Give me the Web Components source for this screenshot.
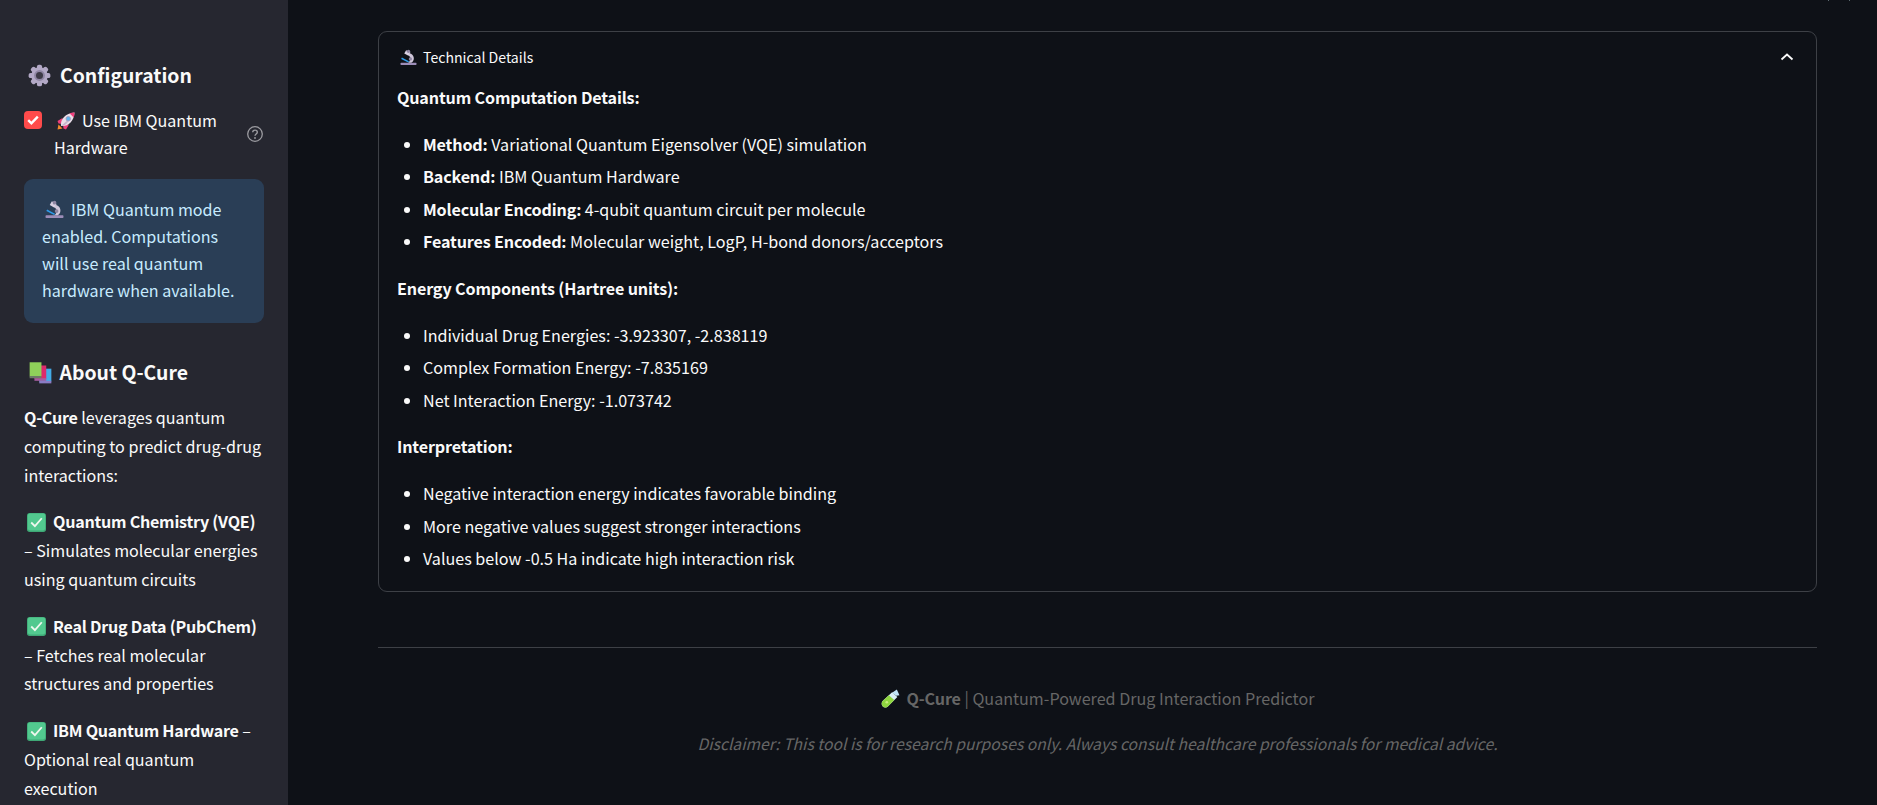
<!DOCTYPE html>
<html lang="en">
<head>
<meta charset="utf-8">
<title>Q-Cure</title>
<style>
    html, body {
        margin: 0;
        height: 100%;
        overflow: hidden;
        background: #0e1117;
        color: #fafafa;
        font-family: "Noto Sans CJK SC", "Noto Sans", sans-serif;
    }
    li b { letter-spacing: -.15px; }
    q-note b { letter-spacing: -.25px; }
</style>
</head>
<body>

<q-app>
    <q-sidebar slot="sidebar">
        <q-heading emoji="gear">Configuration</q-heading>
        <q-checkbox emoji="rocket">Use IBM Quantum Hardware</q-checkbox>
        <q-info emoji="microscope">IBM Quantum mode enabled. Computations will use real quantum hardware when available.</q-info>
        <q-heading emoji="books" class="about">About Q-Cure</q-heading>
        <q-note><b>Q-Cure</b> leverages quantum computing to predict drug-drug interactions:</q-note>
        <q-note check><b>Quantum Chemistry (VQE)</b> – Simulates molecular energies using quantum circuits</q-note>
        <q-note check><b>Real Drug Data (PubChem)</b> – Fetches real molecular structures and properties</q-note>
        <q-note check><b>IBM Quantum Hardware</b> – Optional real quantum execution</q-note>
    </q-sidebar>

    <q-expander label="Technical Details" emoji="microscope">
        <q-detail-group title="Quantum Computation Details:">
            <li><b>Method:</b> Variational Quantum Eigensolver (VQE) simulation</li>
            <li><b>Backend:</b> IBM Quantum Hardware</li>
            <li><b>Molecular Encoding:</b> 4-qubit quantum circuit per molecule</li>
            <li><b>Features Encoded:</b> Molecular weight, LogP, H-bond donors/acceptors</li>
        </q-detail-group>
        <q-detail-group title="Energy Components (Hartree units):">
            <li>Individual Drug Energies: -3.923307, -2.838119</li>
            <li>Complex Formation Energy: -7.835169</li>
            <li>Net Interaction Energy: -1.073742</li>
        </q-detail-group>
        <q-detail-group title="Interpretation:" class="last">
            <li>Negative interaction energy indicates favorable binding</li>
            <li>More negative values suggest stronger interactions</li>
            <li>Values below -0.5 Ha indicate high interaction risk</li>
        </q-detail-group>
    </q-expander>

    <q-footer></q-footer>
</q-app>

<script>
'use strict'

// Emoji drawn by hand, there is no colour emoji font on the machine.
const EMOJI = {
    gear: `<svg viewBox="0 0 36 36">
        <g fill="#b3a9c6">
            <circle cx="18" cy="18" r="13"/>
            <rect x="14" y="1" width="8" height="34" rx="3"/>
            <rect x="14" y="1" width="8" height="34" rx="3" transform="rotate(45 18 18)"/>
            <rect x="14" y="1" width="8" height="34" rx="3" transform="rotate(90 18 18)"/>
            <rect x="14" y="1" width="8" height="34" rx="3" transform="rotate(135 18 18)"/>
        </g>
        <circle cx="18" cy="18" r="8.5" fill="#8f86a3"/>
        <circle cx="18" cy="18" r="5.5" fill="#3d3a46"/>
    </svg>`,
    rocket: `<svg viewBox="0 0 36 36">
        <path d="M1 35l2-10 8 8z" fill="#f58a2c"/>
        <path d="M11 12L1 18l2 5 8 1zM24 25l-6 10-5-2-1-8z" fill="#ef3f7c"/>
        <path d="M8 28C6 15 17 2 35 1c-1 18-14 29-27 27z" fill="#eadfe9"/>
        <path d="M25 2.500c3-.9 6.500-1.400 10-1.500-.1 3.500-.6 7-1.500 10z" fill="#ef3f7c"/>
        <path d="M8 28l18-16c-3 9-10 16-18 16z" fill="#c9b4cc"/>
        <circle cx="22.500" cy="13.500" r="4.500" fill="#5fb4ec" stroke="#a79bbb" stroke-width="1.800"/>
    </svg>`,
    microscope: `<svg viewBox="0 0 36 36">
        <rect x="1" y="29" width="34" height="5" rx="1.500" fill="#9c8db8"/>
        <path d="M20 9c10 2 13 15 4 20h-7c6-3 7-12 1-15z" fill="#cfc6da"/>
        <path d="M13 2.500l9 5-4 7-9-5z" fill="#d9d0e2"/>
        <circle cx="18" cy="5" r="3.500" fill="#8f86a3"/>
        <circle cx="22" cy="21" r="3.500" fill="#8f86a3"/>
        <path d="M4 18l15 8-1.500 2.500L2.500 21z" fill="#2f9bea"/>
    </svg>`,
    books: `<svg viewBox="0 0 36 36">
        <path d="M16 12h19v20H16z" fill="#43ace8"/>
        <path d="M16 31h19v4H16z" fill="#8a7cc4"/>
        <path d="M8.500 7h18.500v21H8.500z" fill="#dd2a6c"/>
        <path d="M8.500 27h18.500v4H8.500z" fill="#a65ca0"/>
        <path d="M1 2h18.500v22H1z" fill="#8fd15a"/>
        <path d="M1 23.500h18.500v3.500H1z" fill="#6d7a68"/>
    </svg>`,
    check: `<svg viewBox="0 0 36 36">
        <rect x="0" y="0" width="36" height="36" rx="5" fill="#3fa876"/>
        <rect x="1.500" y="1" width="33" height="32" rx="4" fill="#52c98f"/>
        <path d="M8 18l7 7L28 10" fill="none" stroke="#eef8ee" stroke-width="3.400"/>
    </svg>`,
    tube: `<svg viewBox="0 0 36 36">
        <path d="M21 7l9-6 5 11-6 1z" fill="#bfe3f7"/>
        <path d="M21 6l10 9-17 17c-4 4-8 3.500-10.500 1S0 26 4 22z" fill="#d8eff7"/>
        <path d="M15 12l10 9-11 11c-4 4-8 3.500-10.500 1S0 26 4 22z" fill="#8fd63f"/>
        <circle cx="11" cy="25" r="2.500" fill="#c8ee7e"/>
    </svg>`
};

// Inline emoji, sized by the parent through custom properties.
class QEmoji extends HTMLElement {
    connectedCallback() {
        const root = this.shadowRoot || this.attachShadow({ mode: 'open' });
        root.innerHTML = `
        <style>
            :host {
                display: inline-block;
                width: var(--emoji-size, 18px);
                height: var(--emoji-size, 18px);
                margin: var(--emoji-margin, 0 7px 0 3px);
            }
            svg { display: block; width: 100%; height: 100%; }
        </style>
        ${EMOJI[this.getAttribute('name')] || ''}`;
    }
}
customElements.define('q-emoji', QEmoji);

// Two column page: sidebar on the left, content in the slot on the right.
class QApp extends HTMLElement {
    constructor() {
        super();
        this.attachShadow({ mode: 'open' });
        this.shadowRoot.innerHTML = `
        <style>
            :host {
                display: grid;
                grid-template-columns: 288px 1fr;
                height: 805px;
                overflow: hidden;
            }
            main {
                padding: 0 60px 0 90px;
                min-width: 0;
            }
            .clipped {
                display: flex;
                justify-content: flex-end;
                gap: 20px;
                height: 1px;
                margin: 0 -33px 30px 0;
            }
            .clipped i { width: 1px; height: 1px; background: #5c6a70; }
        </style>
        <slot name="sidebar"></slot>
        <main>
            <div class="clipped"><i></i><i></i></div>
            <slot></slot>
        </main>`;
    }
}
customElements.define('q-app', QApp);

class QSidebar extends HTMLElement {
    constructor() {
        super();
        this.attachShadow({ mode: 'open' });
        this.shadowRoot.innerHTML = `
        <style>
            :host {
                display: block;
                box-sizing: border-box;
                height: 805px;
                overflow: hidden;
                background: #262730;
                padding: 60px 24px 0;
            }
        </style>
        <slot></slot>`;
    }
}
customElements.define('q-sidebar', QSidebar);

class QHeading extends HTMLElement {
    constructor() {
        super();
        this.attachShadow({ mode: 'open' });
        this.shadowRoot.innerHTML = `
        <style>
            :host {
                display: block;
                font-size: 19.400px;
                font-weight: 600;
                line-height: 30px;
                margin: 0 0 16.5px;
                padding-left: 4px;
            }
            :host(.about) { margin: 34px 0 16.5px; padding-left: 4.500px; --heading-gap: 8px; }
            q-emoji { --emoji-size: 23px; --emoji-margin: 0 var(--heading-gap, 9px) 0 0; vertical-align: -4px; }
        </style>
        <q-emoji name="${this.getAttribute('emoji')}"></q-emoji><slot></slot>`;
    }
}
customElements.define('q-heading', QHeading);

class QCheckbox extends HTMLElement {
    constructor() {
        super();
        this.attachShadow({ mode: 'open' });
        this.shadowRoot.innerHTML = `
        <style>
            :host {
                display: flex;
                align-items: center;
                font-size: 16.100px;
                line-height: 27px;
                margin-bottom: 18.5px;
            }
            .box {
                flex: none;
                align-self: flex-start;
                width: 18px;
                height: 18px;
                margin: 4.500px 12px 0 0;
                background: #ff4b4b;
                border-radius: 4px;
            }
            .box svg { display: block; width: 18px; height: 18px; }
            .label { flex: 1; min-width: 0; }
            .help { flex: none; display: block; width: 18px; height: 18px; }
            q-emoji { --emoji-size: 18px; --emoji-margin: 0 7px 0 3px; vertical-align: -3px; }
        </style>
        <span class="box">
            <svg viewBox="0 0 18 18"><path d="M4.200 9.200l3.200 3.200 6.400-6.800" fill="none" stroke="#fff" stroke-width="2.400"/></svg>
        </span>
        <span class="label"><q-emoji name="${this.getAttribute('emoji')}"></q-emoji><slot></slot></span>
        <svg class="help" viewBox="0 0 18 18" fill="none" stroke="#9c9ca1" stroke-width="1.300">
            <circle cx="9" cy="9" r="7.300"/>
            <path d="M6.700 7.300c0-1.300 1-2.200 2.300-2.200s2.300.9 2.300 2.100c0 1.700-2.300 1.800-2.300 3.500" stroke-width="1.400"/>
            <circle cx="9" cy="13" r=".9" fill="#9c9ca1" stroke="none"/>
        </svg>`;
    }
}
customElements.define('q-checkbox', QCheckbox);

class QInfo extends HTMLElement {
    constructor() {
        super();
        this.attachShadow({ mode: 'open' });
        this.shadowRoot.innerHTML = `
        <style>
            :host {
                display: block;
                box-sizing: border-box;
                background: #2a3e56;
                color: #c7ebff;
                border-radius: 9px;
                padding: 17px 18px 18.500px;
                font-size: 16.100px;
                line-height: 27px;
            }
            q-emoji { --emoji-size: 19px; --emoji-margin: 0 7px 0 3px; vertical-align: -3px; }
        </style>
        <q-emoji name="${this.getAttribute('emoji')}"></q-emoji><slot></slot>`;
    }
}
customElements.define('q-info', QInfo);

// Paragraph of the sidebar, "check" puts the green tick in front.
class QNote extends HTMLElement {
    constructor() {
        super();
        this.attachShadow({ mode: 'open' });
        const tick = this.hasAttribute('check') ? '<q-emoji name="check"></q-emoji>' : '';
        this.shadowRoot.innerHTML = `
        <style>
            :host {
                display: block;
                font-size: 16.100px;
                line-height: 28.8px;
                margin-bottom: 18px;
            }
            q-emoji { --emoji-size: 19px; --emoji-margin: 0 7px 0 3px; vertical-align: -3.500px; }
            ::slotted(b) { font-weight: 600; }
        </style>
        ${tick}<slot></slot>`;
    }
}
customElements.define('q-note', QNote);

class QExpander extends HTMLElement {
    constructor() {
        super();
        this.attachShadow({ mode: 'open' });
        this.shadowRoot.innerHTML = `
        <style>
            :host {
                display: block;
                border: 1px solid #3d4046;
                border-radius: 9px;
            }
            header {
                display: flex;
                align-items: center;
                height: 51.200px;
                padding: 0 21px 1px 21px;
                box-sizing: border-box;
                font-size: 14.100px;
            }
            header span { flex: 1; }
            header svg { display: block; width: 16px; height: 16px; }
            q-emoji { --emoji-size: 17px; --emoji-margin: 0 6px 0 0; vertical-align: -3px; }
            .body { padding: 0 18px 18px; }
        </style>
        <header>
            <span><q-emoji name="${this.getAttribute('emoji')}"></q-emoji>${this.getAttribute('label')}</span>
            <svg viewBox="0 0 16 16"><path d="M2.500 10.500L8 5.500l5.500 5" fill="none" stroke="#fafafa" stroke-width="1.800"/></svg>
        </header>
        <div class="body"><slot></slot></div>`;
    }
}
customElements.define('q-expander', QExpander);

// Bold title followed by a list, the <li> children come through the slot.
class QDetailGroup extends HTMLElement {
    constructor() {
        super();
        this.attachShadow({ mode: 'open' });
        this.shadowRoot.innerHTML = `
        <style>
            :host {
                display: block;
                font-size: 16.130px;
                line-height: 28.8px;
                margin-bottom: 18px;
            }
            :host(.last) { margin-bottom: 0; }
            p { margin: 0 0 18px; font-weight: 600; letter-spacing: -.15px; }
            ul { margin: 0; padding-left: 26px; }
            ::slotted(li) { margin: 3.600px 0; }
            ::slotted(li:first-child) { margin-top: 0; }
            ::slotted(li:last-child) { margin-bottom: 0; }
        </style>
        <p>${this.getAttribute('title')}</p>
        <ul><slot></slot></ul>`;
        this.removeAttribute('title');
    }
}
customElements.define('q-detail-group', QDetailGroup);

class QFooter extends HTMLElement {
    constructor() {
        super();
        this.attachShadow({ mode: 'open' });
        this.shadowRoot.innerHTML = `
        <style>
            :host {
                display: block;
                margin-top: 55px;
                border-top: 1px solid #3d4046;
                padding-top: 36px;
                text-align: center;
                color: #666;
                font-size: 16.130px;
                line-height: 28.8px;
            }
            p { margin: 0 0 16px; }
            b { font-weight: 600; letter-spacing: -.15px; }
            em { font-style: italic; font-size: 15.700px; }
            q-emoji { --emoji-size: 19px; --emoji-margin: 0 7px 0 0; vertical-align: -3px; }
        </style>
        <p><q-emoji name="tube"></q-emoji><b>Q-Cure</b> | Quantum-Powered Drug Interaction Predictor</p>
        <p><em>Disclaimer: This tool is for research purposes only. Always consult healthcare professionals for medical advice.</em></p>`;
    }
}
customElements.define('q-footer', QFooter);
</script>
</body>
</html>
